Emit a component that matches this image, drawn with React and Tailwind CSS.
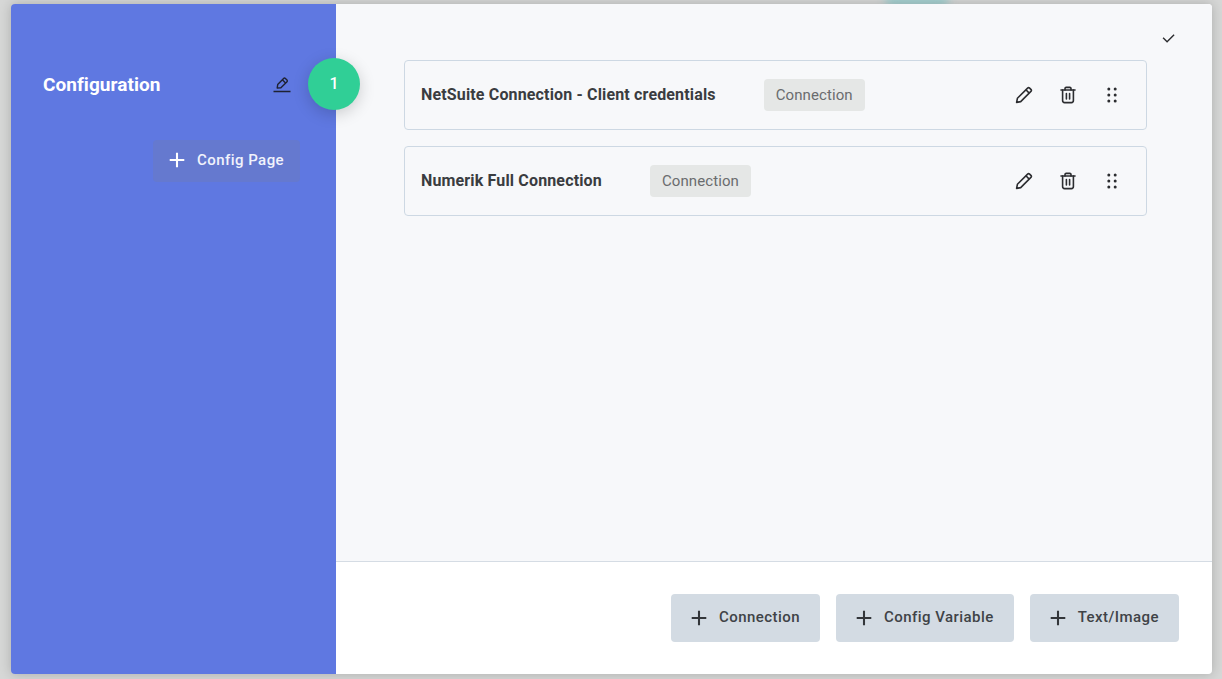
import React from 'react';
import { RiAddLine, RiCheckLine } from 'react-icons/ri';

const PencilIcon = () => (
  <svg width="18" height="18" viewBox="0 0 18 18" fill="none" stroke="currentColor" strokeWidth="1.6" strokeLinejoin="round">
    <path d="M1.6 16.4 L2.4 12.3 L12.6 2.1 Q13.6 1.1 14.6 2.1 L15.9 3.4 Q16.9 4.4 15.9 5.4 L5.7 15.6 Z" />
    <path d="M10.9 3.8 L14.2 7.1" />
  </svg>
);

const TrashIcon = () => (
  <svg width="16" height="18" viewBox="0 0 16 18" fill="none" stroke="currentColor" strokeWidth="1.6" strokeLinecap="round">
    <path d="M1 4 H15" />
    <path d="M5 4 V2.6 A1.2 1.2 0 0 1 6.2 1.4 H9.8 A1.2 1.2 0 0 1 11 2.6 V4" />
    <path d="M2.6 4 V14.6 A2 2 0 0 0 4.6 16.6 H11.4 A2 2 0 0 0 13.4 14.6 V4" />
    <path d="M6.4 7.6 V13 M9.6 7.6 V13" />
  </svg>
);

const GripIcon = () => (
  <svg width="10" height="16" viewBox="0 0 10 16" fill="currentColor">
    <circle cx="1.8" cy="2" r="1.5" />
    <circle cx="8.2" cy="2" r="1.5" />
    <circle cx="1.8" cy="8" r="1.5" />
    <circle cx="8.2" cy="8" r="1.5" />
    <circle cx="1.8" cy="14" r="1.5" />
    <circle cx="8.2" cy="14" r="1.5" />
  </svg>
);

const EditIcon = () => (
  <svg width="18" height="18" viewBox="0 0 18 18" fill="none" stroke="currentColor" strokeWidth="1.4" strokeLinejoin="round">
    <path d="M4.2 13 L4.7 9.6 L10.6 3.4 Q11.5 2.5 12.4 3.4 L14 5 Q14.9 5.9 14 6.8 L7.9 12.8 Z" />
    <path d="M9.3 4.8 L12.6 8.1" />
    <path d="M0.5 16.5 H17.5" />
  </svg>
);

const ConnectionCard = ({ title }) => {
  return (
    <div className="flex h-[70px] items-center rounded border border-[#cdd8e3] pl-4 pr-[22px]">
      <span className="text-base font-bold tracking-[0.15px] text-[#3a3c40]">{title}</span>
      <span className="ml-12 flex h-8 items-center rounded bg-[#e5e7e6] px-3 text-[15px] tracking-[0.1px] text-[#6a6c6e]">Connection</span>
      <div className="ml-auto flex items-center gap-5 text-[#2c2d30]">
        <div className="flex h-6 w-6 items-center justify-center"><PencilIcon /></div>
        <div className="flex h-6 w-6 items-center justify-center"><TrashIcon /></div>
        <div className="flex h-6 w-6 items-center justify-center"><GripIcon /></div>
      </div>
    </div>
  );
};

const AddButton = ({ label }) => {
  return (
    <button className="flex h-12 items-center gap-[10px] rounded bg-[#d3dbe3] pb-px pl-[18px] pr-5 text-[15px] font-medium tracking-[0.45px] text-[#3f4347]">
      <RiAddLine size={20} className="scale-125 text-[#33363a]" />
      {label}
    </button>
  );
};

export default function App() {
  return (
    <div className="relative h-[679px] w-[1222px] overflow-hidden bg-[#d6d7d6] pb-[5px] pl-[11px] pr-[10px] pt-1 font-['Roboto',sans-serif]">
      {/* blurred page behind the modal */}
      <div className="absolute left-[885px] top-[-8px] h-4 w-[64px] rounded-full bg-[#a3cfcf] blur-[4px]"></div>

      <div className="relative flex h-[670px] overflow-hidden rounded shadow-[0_0_12px_rgba(0,0,0,0.2)]">
        {/* Sidebar */}
        <div className="flex w-[325px] shrink-0 flex-col bg-[#5f78e1] pl-8 pr-9 pt-[68px]">
          <div className="flex h-6 items-center justify-between pr-[9px]">
            <span className="pt-0.5 text-[19px] font-bold tracking-[0.05px] text-white">Configuration</span>
            <div className="text-[#1e2233]"><EditIcon /></div>
          </div>
          <button className="ml-auto mt-[44px] flex h-[42px] w-[147px] items-center gap-[10px] rounded bg-[#6579cf] pb-0.5 pl-[14px] text-[15px] font-medium tracking-[0.45px] text-[#f1f3fc]">
            <RiAddLine size={20} className="scale-125 text-white" />
            Config Page
          </button>
        </div>

        {/* Main */}
        <div className="flex min-w-0 flex-1 flex-col bg-white">
          <div className="relative flex-1 border-b border-[#d5dce4] bg-[#f7f8fa] pl-[68px] pr-[65px] pt-[56px]">
            <RiCheckLine size={17} className="absolute right-[35px] top-[26px] text-[#2c2d30]" />
            <div className="flex flex-col gap-4">
              <ConnectionCard title="NetSuite Connection - Client credentials" />
              <ConnectionCard title="Numerik Full Connection" />
            </div>
          </div>
          <div className="flex h-[112px] shrink-0 items-center justify-end gap-4 pr-[33px]">
            <AddButton label="Connection" />
            <AddButton label="Config Variable" />
            <AddButton label="Text/Image" />
          </div>
        </div>
      </div>

      {/* Step badge */}
      <div className="absolute left-[308px] top-[58px] flex h-[52px] w-[52px] items-center justify-center rounded-full bg-[#30cf96] text-base font-medium text-white shadow-[0_4px_16px_rgba(0,0,0,0.18)]">1</div>
    </div>
  );
}
